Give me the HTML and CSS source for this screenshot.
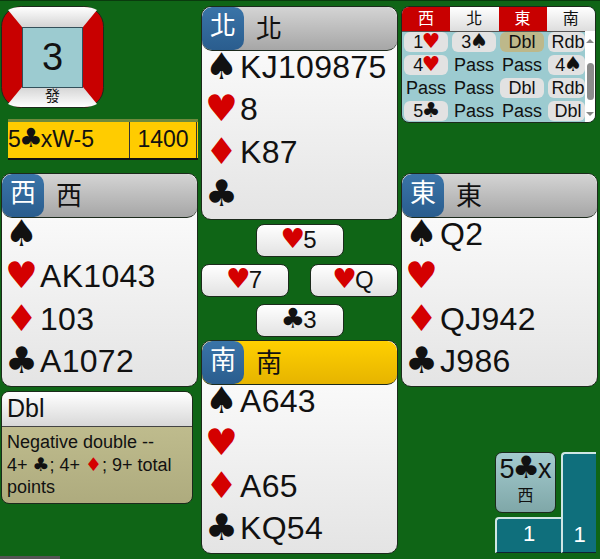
FILE: index.html
```html
<!DOCTYPE html>
<html lang="en">
<head>
  <meta charset="UTF-8"/>
  <title>Bridge table</title>
  <link rel="stylesheet" href="styles.css">
</head>
<body>
  <div class="table">

    <div class="col">
      <div class="board">
        <svg class="board-art" width="103" height="102" viewBox="0 0 103 102">
          <defs>
            <linearGradient id="wht" x1="0" y1="0" x2="0" y2="1">
              <stop offset="0" stop-color="#fff"/><stop offset="1" stop-color="#d4d4d4"/>
            </linearGradient>
            <linearGradient id="wht2" x1="0" y1="0" x2="0" y2="1">
              <stop offset="0" stop-color="#d4d4d4"/><stop offset="1" stop-color="#fff"/>
            </linearGradient>
          </defs>
          <rect x="0.5" y="0.5" width="102" height="101" rx="20" fill="#c80000" stroke="#1c2a1c"/>
          <path d="M7 4 Q12 1 20 1 H83 Q91 1 96 4 L82 21 H21 Z" fill="url(#wht)"/>
          <path d="M7 98 Q12 101 20 101 H83 Q91 101 96 98 L82 81 H21 Z" fill="url(#wht2)"/>
        </svg>
        <div class="board-num">3</div>
        <div class="board-dealer">發</div>
      </div>

      <div class="score">
        <span class="score-contract">5<i class="blk">♣</i>xW-5</span>
        <span class="score-pts">1400</span>
      </div>

      <div class="hand">
        <div class="hand-head"><span class="seat">西</span><span class="name">西</span></div>
        <div class="suits">
          <div class="suit"><i class="blk">♠</i></div>
          <div class="suit"><i class="red">♥</i>AK1043</div>
          <div class="suit"><i class="red">♦</i>103</div>
          <div class="suit"><i class="blk">♣</i>A1072</div>
        </div>
      </div>

      <div class="explain">
        <div class="explain-head">Dbl</div>
        <div class="explain-body">Negative double -- 4+ <b class="blk">♣</b>; 4+ <b class="red">♦</b>; 9+ total points</div>
      </div>
    </div>

    <div class="col">
      <div class="hand">
        <div class="hand-head"><span class="seat">北</span><span class="name">北</span></div>
        <div class="suits">
          <div class="suit"><i class="blk">♠</i>KJ109875</div>
          <div class="suit"><i class="red">♥</i>8</div>
          <div class="suit"><i class="red">♦</i>K87</div>
          <div class="suit"><i class="blk">♣</i></div>
        </div>
      </div>

      <div class="trick">
        <div class="card card-n"><b class="red">♥</b>5</div>
        <div class="card-row">
          <div class="card"><b class="red">♥</b>7</div>
          <div class="card"><b class="red">♥</b>Q</div>
        </div>
        <div class="card card-n"><b class="blk">♣</b>3</div>
      </div>

      <div class="hand">
        <div class="hand-head active"><span class="seat">南</span><span class="name">南</span></div>
        <div class="suits">
          <div class="suit"><i class="blk">♠</i>A643</div>
          <div class="suit"><i class="red">♥</i></div>
          <div class="suit"><i class="red">♦</i>A65</div>
          <div class="suit"><i class="blk">♣</i>KQ54</div>
        </div>
      </div>
    </div>

    <div class="col">
      <div class="auction">
        <div class="auction-head">
          <span class="vul">西</span><span>北</span><span class="vul">東</span><span>南</span>
        </div>
        <div class="auction-main">
          <div class="bids">
            <span class="bid">1<b class="red">♥</b></span><span class="bid">3<b class="blk">♠</b></span><span class="bid picked">Dbl</span><span class="bid">Rdb</span>
            <span class="bid">4<b class="red">♥</b></span><span>Pass</span><span>Pass</span><span class="bid">4<b class="blk">♠</b></span>
            <span>Pass</span><span>Pass</span><span class="bid">Dbl</span><span class="bid">Rdb</span>
            <span class="bid">5<b class="blk">♣</b></span><span>Pass</span><span>Pass</span><span class="bid">Dbl</span>
          </div>
          <div class="scrollbar">
            <span class="arrow-up"></span>
            <span class="thumb"></span>
            <span class="arrow-down"></span>
          </div>
        </div>
      </div>

      <div class="hand hand-east">
        <div class="hand-head"><span class="seat">東</span><span class="name">東</span></div>
        <div class="suits">
          <div class="suit"><i class="blk">♠</i>Q2</div>
          <div class="suit"><i class="red">♥</i></div>
          <div class="suit"><i class="red">♦</i>QJ942</div>
          <div class="suit"><i class="blk">♣</i>J986</div>
        </div>
      </div>

      <div class="tally">
        <div class="contract">
          <div class="contract-bid">5<b class="blk">♣</b>x</div>
          <div class="contract-by">西</div>
        </div>
        <div class="tricks tricks-ns">1</div>
        <div class="tricks tricks-ew">1</div>
      </div>
    </div>

  </div>
  <div class="stub"></div>
</body>
</html>
```

FILE: styles.css
```css
:root {
  --felt: #0f6516;
  --ink: #111;
  --edge: #1c2a1c;
  --red: #d40000;
  --teal: #0f6f7c;
}
* { margin:0; padding:0; box-sizing:border-box; }
html, body { height:100%; overflow:hidden; }
body {
  background: var(--felt);
  border-top: 1px solid #0a3a0e;
  color: var(--ink);
  font-family: "Liberation Sans", "Noto Sans CJK TC", sans-serif;
  position: relative;
}
i, b {
  font-family: "DejaVu Sans", sans-serif;
  font-style: normal;
  font-weight: normal;
  font-size: 1.15em;
  line-height: 0;
  margin: 0 -.07em;
}
.red { color:var(--red); }
.blk { color:#111; }

.table {
  display: grid;
  grid-template-columns: 197px 197px 197px;
  column-gap: 3px;
  padding: 5px 0 0 1px;
}
.col { display:flex; flex-direction:column; }

/* Board */
.board {
  display: grid;
  width: 103px;
  height: 102px;
  place-items: center;
}
.board > * { grid-area: 1 / 1; }
.board-art { display:block; }
.board-num {
  width: 61px;
  height: 61px;
  background: #9ccbd0;
  border: 1px solid #33505a;
  font-size: 38px;
  line-height: 59px;
  text-align: center;
}
.board-dealer {
  align-self: end;
  font-size: 15px;
  line-height: 18px;
  margin-bottom: 3px;
}

/* Score */
.score {
  display: flex;
  height: 41px;
  width: 190px;
  margin: 11px 0 13px 7px;
  background: #ffcc00;
  border-top: 3px solid #6f8a3c;
  border-bottom: 2px solid #111;
  font-size: 23px;
  line-height: 34px;
}
.score-contract { width:122px; border-right:1px solid #333; white-space:nowrap; }
.score-pts { width:67px; border-right:1px solid #333; text-align:center; }

/* Hands */
.hand {
  height: 214px;
  background: linear-gradient(180deg, #fff, #e4e4e4);
  border: 1px solid var(--edge);
  border-radius: 10px;
  overflow: hidden;
}
.hand-head {
  display: flex;
  align-items: center;
  height: 44px;
  padding-bottom: 4px;
  background: linear-gradient(180deg, #d4d4d4, #a6a6a6);
  border-bottom: 1px solid var(--edge);
  border-radius: 10px;
  font-size: 26px;
}
.hand-head.active { background: linear-gradient(180deg, #ffd000, #e6b400); }
.seat {
  display: block;
  align-self: flex-start;
  width: 42px;
  height: 43px;
  background: linear-gradient(180deg, #3a74a8, #2a5d8e);
  border-radius: 10px;
  color: #fff;
  line-height: 39px;
  text-align: center;
}
.name { margin-left:12px; }
.suits { margin-top:-5px; }
.suit {
  display: flex;
  align-items: center;
  height: 42.5px;
  font-size: 32px;
  letter-spacing: .3px;
  white-space: nowrap;
}
.suit i {
  width: 38px;
  margin: 0;
  padding-left: 3px;
  line-height: 1;
  letter-spacing: 0;
}

/* Trick */
.trick {
  display: flex;
  flex-direction: column;
  align-items: center;
  gap: 7px;
  height: 120px;
  padding-top: 4px;
}
.card, .card-n {
  width: 88px;
  height: 33px;
  background: linear-gradient(180deg, #fff, #e2e2e2);
  border: 1px solid var(--edge);
  border-radius: 8px;
  font-size: 24px;
  line-height: 30px;
  text-align: center;
}
.card-row { display:flex; justify-content:space-between; width:197px; }

/* Explanation */
.explain {
  width: 192px;
  margin-top: 4px;
  height: 113px;
  background: linear-gradient(180deg, #c6c394, #aeab7e);
  border: 1px solid var(--edge);
  border-radius: 8px;
  overflow: hidden;
}
.explain-head {
  height: 35px;
  padding-left: 5px;
  background: linear-gradient(180deg, #fff, #d8d8d8);
  border-bottom: 1px solid #444;
  font-size: 25px;
  line-height: 32px;
}
.explain-body {
  padding: 4px 14px 4px 5px;
  font-size: 18px;
  line-height: 22.5px;
}
.explain-body b { font-size:1.05em; margin:0; }

/* Auction */
.auction {
  width: 195px;
  height: 117px;
  background: #9ccbd0;
  border: 1px solid var(--edge);
  border-radius: 8px;
  overflow: hidden;
}
.auction-head {
  display: grid;
  grid-template-columns: repeat(4, 48.25px);
  height: 24px;
  font-size: 16px;
  line-height: 24px;
  text-align: center;
}
.auction-head span { background: linear-gradient(180deg, #fff, #ddd); border-bottom:1px solid #555; }
.auction-head span.vul { background:#c80000; color:#fff; }
.auction-main { display:flex; height:91px; }
.bids {
  display: grid;
  grid-template-columns: 48px 48px 48px 39px;
  grid-auto-rows: 23px;
  flex: 0 0 183px;
  font-size: 18px;
  line-height: 20px;
  text-align: center;
  white-space: nowrap;
}
.bids span { margin:1px 2px 2px; height:20px; }
.bids span:nth-child(4n) { margin-right:0; padding-left:3px; }
.bids .bid { background:#e2e2e2; border-radius:6px; }
.bids .picked { background:#bdb88a; }
.scrollbar {
  display: flex;
  flex: 1;
  flex-direction: column;
  align-items: center;
  justify-content: space-between;
  background: #fff;
  padding: 8px 0 6px;
}
.thumb { width:7px; height:37px; background:#8c8c8c; border-radius:4px; margin-top:8px; }
.arrow-up, .arrow-down { width:0; height:0; border-left:4px solid transparent; border-right:4px solid transparent; }
.arrow-up { border-bottom:4px solid #888; }
.arrow-down { border-top:4px solid #888; }

.hand-east { margin-top:50px; }

/* Contract and trick tally */
.tally {
  display: grid;
  grid-template-columns: 66px 35px;
  grid-template-rows: 65px 36px;
  width: 101px;
  margin: 65px 0 0 94px;
}
.contract {
  width: 61px;
  height: 61px;
  background: linear-gradient(180deg, #a4cbcf, #7fa7a8);
  border: 1px solid var(--edge);
  border-radius: 7px;
  text-align: center;
}
.contract-bid { font-size:27px; line-height:33px; white-space:nowrap; }
.contract-by { font-size:16px; line-height:20px; }
.tricks {
  background: var(--teal);
  border-top: 2px solid #cfe6e4;
  border-left: 2px solid #cfe6e4;
  border-radius: 4px 0 0 0;
  color: #fff;
  font-size: 22px;
  text-align: center;
}
.tricks-ns { line-height:30px; border-bottom:1px solid #123; }
.tricks-ew { grid-column:2; grid-row:1 / 3; padding-top:68px; border-bottom:1px solid #123; }

.stub {
  position: absolute;
  left: 0;
  bottom: 0;
  width: 60px;
  height: 3px;
  background: #555;
}
```
